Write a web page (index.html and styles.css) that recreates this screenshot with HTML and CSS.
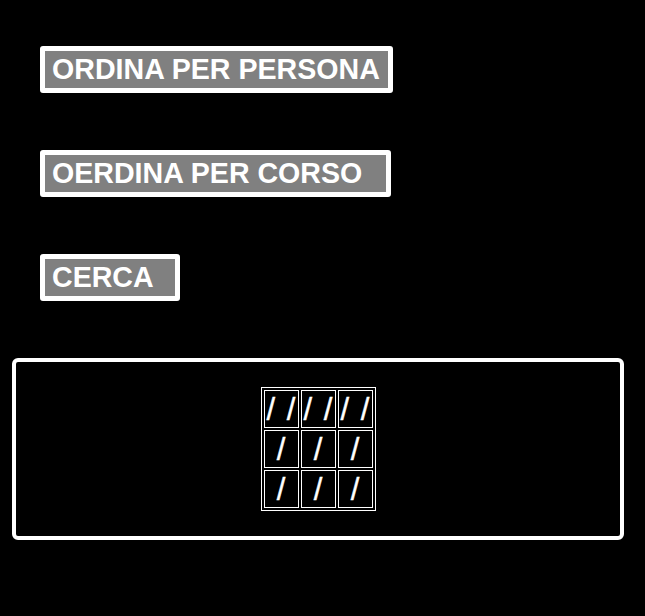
FILE: index.html
```html
<!DOCTYPE html>
<html>
<head>
<meta charset="utf-8">
<link rel="stylesheet" href="styles.css">
</head>
<body>
<div class="page">
  <div class="actions">
    <div class="btn btn-persona">ORDINA PER PERSONA</div>
    <div class="btn btn-corso">OERDINA PER CORSO</div>
    <div class="btn btn-cerca">CERCA</div>
  </div>
  <div class="panel">
    <table class="grid">
      <tr><td>/ /</td><td>/ /</td><td>/ /</td></tr>
      <tr><td>/</td><td>/</td><td>/</td></tr>
      <tr><td>/</td><td>/</td><td>/</td></tr>
    </table>
  </div>
</div>
</body>
</html>
```

FILE: styles.css
```css
html, body {
  margin: 0;
  padding: 0;
  background: #000;
}
.page {
  padding: 46px 21px 0 12px;
}
.actions {
  display: flex;
  flex-direction: column;
  align-items: flex-start;
  gap: 57px;
  padding-left: 28px;
}
.btn {
  box-sizing: border-box;
  height: 47px;
  border: 5px solid #fff;
  border-radius: 3px;
  background: #808080;
  color: #fff;
  font-family: "Liberation Sans", Arial, sans-serif;
  font-weight: bold;
  font-size: 28.6px;
  line-height: 36px;
  padding-left: 7px;
  white-space: nowrap;
  overflow: hidden;
}
.btn-persona { width: 353px; }
.btn-corso { width: 351px; }
.btn-cerca { width: 140px; }
.panel {
  box-sizing: border-box;
  margin-top: 57px;
  width: 612px;
  height: 182px;
  border: 4px solid #fff;
  border-radius: 6px;
  display: flex;
  justify-content: center;
  align-items: flex-start;
  padding-top: 25px;
}
.grid {
  border: 1px solid #fff;
  border-spacing: 2px;
  border-collapse: separate;
}
.grid td {
  box-sizing: border-box;
  width: 35px;
  height: 38px;
  padding: 0;
  border: 1px solid #fff;
  color: #fff;
  font-family: "Liberation Sans", Arial, sans-serif;
  font-size: 31px;
  line-height: 35px;
  text-align: center;
  white-space: nowrap;
  word-spacing: 3px;
  -webkit-text-stroke: 0.4px #fff;
}
```
